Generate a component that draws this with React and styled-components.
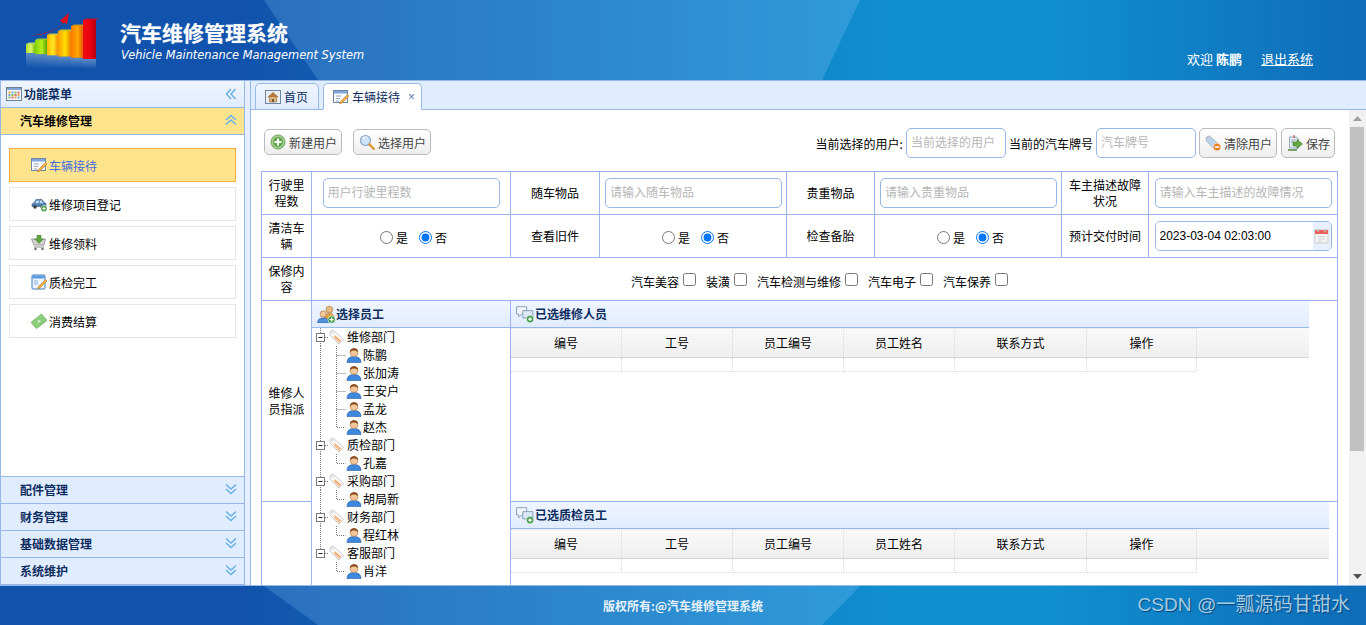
import React from "react";
import styled, { createGlobalStyle, css } from "styled-components";

const GlobalStyle = createGlobalStyle`
  html, body { margin: 0; height: 100%; overflow: hidden; }
  body { font-family: "Liberation Sans", "Noto Sans CJK SC", sans-serif; font-size: 12px; color: #000; }
  * { box-sizing: border-box; }
`;

const blueBar = css`
  position: relative;
  overflow: hidden;
  color: #fff;
  background: linear-gradient(90deg, #1153ac 0%, #1153ac 18%, #1090d0 66%, #1090d0 76%, #0e6cb8 100%);
  &::before {
    content: "";
    position: absolute;
    inset: 0;
    background: linear-gradient(90deg, #2a6ebd 18%, #2f9ad8 62%);
    clip-path: polygon(264px 0, 860px 0, 822px 100%, 318px 100%);
  }
  & > * { position: relative; }
`;

const Page = styled.div`
  height: 625px;
  display: flex;
  flex-direction: column;
`;

const Header = styled.header`
  ${blueBar}
  height: 80px;
  flex: none;
  display: flex;
  padding: 8px 53px 0 20px;
`;

const Brand = styled.div`
  margin-left: 15px;
  padding-top: 11px;
  flex: 1;
`;

const Title = styled.h1`
  margin: 0;
  font-size: 21px;
  line-height: 26px;
  font-weight: 700;
  font-family: "Noto Sans CJK SC", sans-serif;
  text-shadow: 0 0 1px rgba(255, 255, 255, 0.5);
`;

const SubTitle = styled.div`
  font-family: "DejaVu Sans", sans-serif;
  font-style: italic;
  font-size: 11.42px;
  line-height: 16px;
  margin: 2px 0 0 1px;
`;

const UserBox = styled.div`
  display: flex;
  align-items: center;
  gap: 19px;
  height: 16px;
  margin-top: 42px;
  font-size: 13px;
  font-family: "Noto Sans CJK SC", sans-serif;
  b { font-weight: 700; }
  a { color: #fff; text-decoration: underline; }
`;

const Body = styled.div`
  flex: 1;
  min-height: 0;
  display: flex;
  gap: 5px;
  background: #e6efff;
  border-top: 1px solid #95b8e7;
`;

const Side = styled.aside`
  width: 245px;
  flex: none;
  display: flex;
  flex-direction: column;
  border-left: 1px solid #95b8e7;
  border-right: 1px solid #95b8e7;
`;

const PanelHead = styled.div`
  height: 27px;
  flex: none;
  display: flex;
  align-items: center;
  gap: ${(p) => p.$gap ?? 2}px;
  padding: 0 ${(p) => p.$right ?? 0}px 0 ${(p) => p.$left ?? 5}px;
  background: linear-gradient(#eff5ff, #e0ecff);
  border-bottom: 1px solid #95b8e7;
  color: #0e2d5f;
  font-weight: 700;
  font-family: "Noto Sans CJK SC", sans-serif;
  line-height: 16px;
  & > span { flex: 1; }
`;

const AccordionHead = styled.div`
  height: 27px;
  flex: none;
  display: flex;
  align-items: center;
  justify-content: space-between;
  padding: 0 7px 2px 19px;
  background: ${(p) => (p.$active ? "#ffe48d" : "#e0ecff")};
  color: ${(p) => (p.$active ? "#000" : "#0e2d5f")};
  border-bottom: 1px solid #95b8e7;
  font-weight: 700;
  font-family: "Noto Sans CJK SC", sans-serif;
`;

const MenuList = styled.div`
  flex: 1;
  background: #fff;
  padding: 13px 8px 0;
  display: flex;
  flex-direction: column;
  gap: 5px;
  border-bottom: 1px solid #95b8e7;
`;

const MenuItem = styled.div`
  height: 34px;
  flex: none;
  display: flex;
  align-items: center;
  gap: 2px;
  padding-left: 21px;
  border: 1px solid ${(p) => (p.$active ? "#ffab3f" : "#e5e5e5")};
  background: ${(p) => (p.$active ? "#ffe48d" : "#fff")};
  color: ${(p) => (p.$active ? "#416ce0" : "#000")};
  font-family: "Noto Sans CJK SC", sans-serif;
`;

const Main = styled.main`
  flex: 1;
  min-width: 0;
  display: flex;
  flex-direction: column;
  background: #fff;
  border-left: 1px solid #95b8e7;
`;

const TabBar = styled.div`
  height: 29px;
  flex: none;
  display: flex;
  align-items: flex-end;
  gap: 4px;
  padding-left: 4px;
  background: #e0ecff;
  border-bottom: 1px solid #95b8e7;
`;

const Tab = styled.div`
  height: 27px;
  margin-bottom: -1px;
  display: flex;
  align-items: center;
  gap: 3px;
  padding: 0 ${(p) => (p.$active ? 6 : 10)}px 0 9px;
  border: 1px solid #95b8e7;
  border-radius: 5px 5px 0 0;
  color: #0e2d5f;
  font-family: "Noto Sans CJK SC", sans-serif;
  background: ${(p) => (p.$active ? "#fff" : "linear-gradient(#eff5ff, #e0ecff)")};
  border-bottom-color: ${(p) => (p.$active ? "#fff" : "#95b8e7")};
  i { font: 12px "Liberation Sans", sans-serif; color: #5a7db0; margin-left: 5px; }
`;

const ContentRow = styled.div`
  flex: 1;
  min-height: 0;
  display: flex;
`;

const Content = styled.div`
  flex: 1;
  min-width: 0;
  overflow-y: auto;
  padding: 18px 0 11px 10px;
`;

const ScrollRail = styled.div`
  width: 17px;
  flex: none;
  display: flex;
  flex-direction: column;
  background: #f1f1f1;
`;

const RailButton = styled.div`
  height: 17px;
  flex: none;
  display: flex;
  align-items: center;
  justify-content: center;
`;

const RailThumb = styled.div`
  height: 324px;
  flex: none;
  margin: 0 2px 0 1px;
  background: #c1c1c1;
`;

const RailSpace = styled.div`
  flex: 1;
`;

const Toolbar = styled.div`
  width: 1071px;
  height: 30px;
  margin: 0 0 13px 3px;
  display: flex;
  align-items: center;
  justify-content: space-between;
`;

const Group = styled.div`
  display: flex;
  align-items: center;
  gap: ${(p) => p.$gap}px;
  margin-left: ${(p) => p.$left ?? 0}px;
  margin-bottom: ${(p) => p.$lift ?? 0}px;
`;

const Button = styled.a`
  height: ${(p) => (p.$tall ? 30 : 26)}px;
  display: inline-flex;
  align-items: center;
  gap: 3px;
  padding: 0 4px 0 5px;
  border: 1px solid #bbb;
  border-radius: 5px;
  background: linear-gradient(#fff, #eee);
  color: #444;
  font-family: "Noto Sans CJK SC", sans-serif;
`;

const Caption = styled.span`
  font-family: "Noto Sans CJK SC", sans-serif;
  margin: 0 3px 0 ${(p) => p.$left ?? 0}px;
`;

const TextBox = styled.input`
  width: ${(p) => p.$w ?? 177}px;
  height: 30px;
  padding: 0 4px;
  border: 1px solid #95b8e7;
  border-radius: 5px;
  outline: none;
  font: 12px "Liberation Sans", "Noto Sans CJK SC", sans-serif;
  color: #000;
  vertical-align: middle;
  &::placeholder { color: #b5b5b5; opacity: 1; }
`;

const DateBox = styled.div`
  width: 177px;
  height: 30px;
  margin: 0 auto;
  display: flex;
  border: 1px solid #95b8e7;
  border-radius: 5px;
  overflow: hidden;
  input {
    flex: 1;
    min-width: 0;
    border: 0;
    outline: none;
    padding: 0 4px;
    font: 12px "Liberation Sans", sans-serif;
    color: #000;
  }
`;

const DateButton = styled.span`
  width: 18px;
  flex: none;
  display: flex;
  align-items: center;
  justify-content: center;
  background: #e8f0fd;
`;

const FormTable = styled.table`
  width: 1077px;
  table-layout: fixed;
  border-collapse: collapse;
  font-family: "Noto Sans CJK SC", sans-serif;
  line-height: 16px;
  td {
    border: 1px solid #9bb3f5;
    padding: 5px;
    text-align: center;
    height: 43px;
  }
`;

const FlushCell = styled.td`
  && {
    padding: 0;
    height: ${(p) => p.$h}px;
    vertical-align: top;
    text-align: left;
  }
`;

const RadioGroup = styled.div`
  padding-top: 2px;
`;

const Radio = styled.input.attrs({ type: "radio" })`
  vertical-align: -1px;
`;

const RadioGap = styled.span`
  display: inline-block;
  width: 6px;
`;

const CheckList = styled.div`
  display: flex;
  justify-content: center;
  gap: 7px;
  padding: 6px 7px 0 0;
  label { display: flex; align-items: center; line-height: 16px; }
  input { margin: -3px 3px 3px 4px; }
`;

const TreeBox = styled.div`
  padding-left: 3px;
  height: 270px;
`;

const TreeRow = styled.div`
  height: 18px;
  display: flex;
  align-items: center;
`;

const NodeText = styled.span`
  margin-left: ${(p) => p.$left}px;
`;

const GridPanel = styled.div`
  width: ${(p) => p.$w}px;
`;

const GridHead = styled.div`
  height: 30px;
  display: flex;
  background: linear-gradient(#f9f9f9, #efefef);
  border-bottom: 1px solid #d4d4d4;
`;

const GridRow = styled.div`
  height: 14px;
  display: flex;
`;

const GridCell = styled.div`
  width: ${(p) => p.$w}px;
  flex: none;
  display: flex;
  align-items: center;
  justify-content: center;
  border-right: 1px dotted #d8d8d8;
  border-top: ${(p) => (p.$body ? "0" : "1px dotted #dcdcdc")};
  border-bottom: ${(p) => (p.$body ? "1px dotted #d8d8d8" : "0")};
`;

const Footer = styled.footer`
  ${blueBar}
  height: 40px;
  flex: none;
  border-top: 1px solid #95b8e7;
  display: flex;
  align-items: center;
  justify-content: center;
  font-weight: 700;
  font-family: "Noto Sans CJK SC", sans-serif;
  color: #e8f2fb;
`;

const Watermark = styled.div`
  && { position: absolute; }
  right: 16px;
  top: 6px;
  font-size: 19.1px;
  line-height: 26px;
  font-weight: 400;
  font-family: "Liberation Sans", "Noto Sans CJK SC", sans-serif;
  color: #a3cbe2;
  text-shadow: 1px 1px 1px rgba(0, 30, 80, 0.6);
`;

const Shape = styled.svg`
  flex: none;
  display: block;
`;

const Arrow = ({ dir }) => {
  const rot = { left: -90, up: 0, down: 180 }[dir];
  return (
    <Shape width="12" height="12" viewBox="0 0 12 12" fill="none" stroke="#66aee8" strokeWidth="1.4">
      <g transform={`rotate(${rot} 6 6)`}>
        <path d="M1 6l5-4.5L11 6M1 10.5L6 6l5 4.5" />
      </g>
    </Shape>
  );
};

const icons = {
  grid: (
    <>
      <rect x=".5" y="1.5" width="15" height="13" fill="#f4f6fb" stroke="#6f7f96" />
      <rect x="1" y="2" width="14" height="2" fill="#7fa4d8" />
      {[2.5, 5.5, 8.5, 11.5].map((x, i) =>
        [5.5, 8, 10.5].map((y, j) => (
          <rect key={x + "-" + y} x={x} y={y} width="2" height="2" fill={["#e9a33c", "#6ca9e0", "#86bd5a", "#d9716a"][(i + j) % 4]} />
        ))
      )}
    </>
  ),
  home: (
    <>
      <rect x=".5" y="1.5" width="15" height="13" fill="#e9eef5" stroke="#6f86a5" />
      <path d="M8 3.500L3 8h1.500v5h7V8H13z" fill="#d6b27c" stroke="#9c6d34" strokeWidth=".6" />
      <path d="M8 3.500L3 8h10z" fill="#b9763f" />
      <rect x="7" y="10" width="2" height="3" fill="#7a5a30" />
    </>
  ),
  formPen: (
    <>
      <rect x=".5" y="1.5" width="14" height="12" fill="#f7f9fc" stroke="#6f86a5" />
      <rect x="1" y="2" width="13" height="2.5" fill="#7ea6da" />
      <path d="M3 7h5M3 9.5h4M3 12h3" stroke="#9aa8ba" />
      <path d="M14.5 5.5l1.5 1.5-7 7-2.5 1 1-2.5z" fill="#f2b04a" stroke="#b9772a" strokeWidth=".6" />
    </>
  ),
  formBlue: (
    <>
      <rect x="1" y="1" width="13" height="14" rx="1" fill="#eef4fb" stroke="#3d7cc4" />
      <rect x="1.5" y="1.5" width="12" height="3" fill="#5b9ade" />
      <rect x="3" y="6" width="4" height="5" fill="#b9d3ef" />
      <path d="M14.5 5.5l1.5 1.5-7 7-2.5 1 1-2.5z" fill="#f2b04a" stroke="#b9772a" strokeWidth=".6" />
    </>
  ),
  carAdd: (
    <>
      <path d="M1 10.5V8l2-1 2-3.5h6l2 3 2 1v3z" fill="#4f7fb5" stroke="#35597f" strokeWidth=".6" />
      <path d="M5.5 4.5h2.3v2.7H4zM8.7 4.5h2l1.5 2.7H8.7z" fill="#bfd8ef" />
      <circle cx="4" cy="11" r="1.7" fill="#3a3a3a" />
      <circle cx="11" cy="11" r="1.7" fill="#3a3a3a" />
      <circle cx="13" cy="12.5" r="3.2" fill="#3f9a46" stroke="#fff" strokeWidth=".5" />
      <path d="M13 10.8v3.4M11.3 12.5h3.4" stroke="#fff" strokeWidth="1.1" />
    </>
  ),
  cart: (
    <>
      <path d="M.5 4h14l-1.5 6H3z" fill="#d8d8d8" stroke="#8b8b8b" strokeWidth=".8" />
      <path d="M3 12h10" stroke="#8b8b8b" />
      <circle cx="4.5" cy="14" r="1.3" fill="#777" />
      <circle cx="11.5" cy="14" r="1.3" fill="#777" />
      <path d="M6 0h4v4h2.5L8 8.5 3.5 4H6z" fill="#62a83f" stroke="#3f7d26" strokeWidth=".5" />
    </>
  ),
  money: (
    <>
      <path d="M0 9.5L10.5 1 16 7.5 5.5 15.5z" fill="#8ccf7c" stroke="#5ea650" strokeWidth=".7" />
      <circle cx="8" cy="8.3" r="2.2" fill="#c6ebb9" stroke="#5ea650" strokeWidth=".5" />
    </>
  ),
  add: (
    <>
      <circle cx="8" cy="8" r="7" fill="#a8cf96" stroke="#6ea35a" />
      <circle cx="8" cy="8" r="5" fill="#5fa747" />
      <path d="M8 4.5v7M4.5 8h7" stroke="#fff" strokeWidth="2" />
    </>
  ),
  search: (
    <>
      <circle cx="6.5" cy="6.5" r="5" fill="#cfe4f8" stroke="#8ba8c8" strokeWidth="1.2" />
      <path d="M3.5 5a3.5 3.5 0 0 1 3-2" stroke="#fff" fill="none" />
      <path d="M10.3 10.3l4.5 4.5" stroke="#d99a3c" strokeWidth="2.4" strokeLinecap="round" />
    </>
  ),
  tagMinus: (
    <>
      <path d="M1 2.5L4.5 1 14 9.5 9.5 14 1.5 6z" fill="#bcd6ef" stroke="#9ca9b8" strokeWidth=".8" />
      <circle cx="3.7" cy="3.7" r="1" fill="#fff" stroke="#8c9aab" strokeWidth=".5" />
      <circle cx="12" cy="12" r="3.8" fill="#ea7b1d" stroke="#fff" strokeWidth=".5" />
      <rect x="9.8" y="11.2" width="4.4" height="1.6" fill="#fff" />
    </>
  ),
  save: (
    <>
      <path d="M2.5 2h7l2 2v9h-9z" fill="#e6edf6" stroke="#8296ad" strokeWidth=".8" />
      <path d="M4 5h5M4 7h3" stroke="#9aa9ba" />
      <path d="M7 0v3" stroke="#c0392b" />
      <path d="M6 7h4V4.5L15.5 9 10 13.5V11H6z" fill="#65a844" stroke="#3f7d26" strokeWidth=".6" />
      <path d="M1 15h9" stroke="#4a7f34" strokeWidth="1.4" />
    </>
  ),
  calendar: (
    <>
      <rect x="1" y="2" width="13" height="13" fill="#f3f3f3" stroke="#cfcfcf" />
      <rect x="1" y="2" width="13" height="4" fill="#e8615a" />
      <path d="M4 1v3M11 1v3" stroke="#c8c8c8" strokeWidth="1.4" />
      <path d="M4 8.5h7M4 11h7M4 13h4" stroke="#cdd3da" />
    </>
  ),
  tag: (
    <>
      <path d="M1 3l3-2 10.5 9.5L10 15 1.5 6.5z" fill="#fbfbfb" stroke="#c9c9c9" />
      <path d="M6 6l6.5 5.5-2.5 2.5L4.5 8z" fill="#f6b98a" />
      <circle cx="3.5" cy="3.5" r=".9" fill="#fff" stroke="#bbb" strokeWidth=".5" />
    </>
  ),
  user: (
    <>
      <path d="M1 15.5c0-4 2.5-6 7-6s7 2 7 6z" fill="#3d87dd" stroke="#2a5d9e" strokeWidth=".6" />
      <circle cx="8" cy="5.5" r="4" fill="#f1c79c" stroke="#a6683a" strokeWidth=".5" />
      <path d="M4 5.5C3.8 2.5 6 1.2 8 1.2s4.2 1.3 4 4.3c-1-1.5-2.5-2-4-2s-3 .5-4 2z" fill="#8a4a1f" />
    </>
  ),
  usersAdd: (
    <>
      <circle cx="11" cy="4" r="3" fill="#e6b77f" stroke="#a3702f" strokeWidth=".5" />
      <path d="M6.5 13c0-4 1.500-5.500 4.500-5.500s4.500 1.500 4.500 5.500z" fill="#dfa23f" stroke="#a3702f" strokeWidth=".5" />
      <circle cx="5.500" cy="8" r="2.800" fill="#f1c79c" stroke="#a6683a" strokeWidth=".5" />
      <path d="M.5 16c0-3.500 2-4.500 5-4.500s5 1 5 4.500z" fill="#4f8fdb" stroke="#2a5d9e" strokeWidth=".5" />
      <circle cx="13" cy="13" r="3.300" fill="#3f9a46" stroke="#fff" strokeWidth=".5" />
      <path d="M13 11.200v3.600M11.200 13h3.600" stroke="#fff" strokeWidth="1.100" />
    </>
  ),
  chatAdd: (
    <>
      <path d="M.5 1.500h9v6.500H5L2.500 10.500V8h-2z" fill="#f2f6fb" stroke="#7f98b5" strokeWidth=".8" />
      <path d="M6 5h9v6.500h-2V14l-2.500-2.500H6z" fill="#dbe7f4" stroke="#7f98b5" strokeWidth=".8" />
      <circle cx="12.500" cy="12.500" r="3.300" fill="#3f9a46" stroke="#fff" strokeWidth=".5" />
      <path d="M12.500 10.800v3.400M10.800 12.500h3.400" stroke="#fff" strokeWidth="1.100" />
    </>
  ),
};

const Icon = ({ name, size = 16 }) => (
  <Shape width={size} height={size} viewBox="0 0 16 16">
    {icons[name]}
  </Shape>
);

const bars = [
  { x: 6, w: 9, top: 36, id: "a", c: ["#a9e02a", "#dcf56a", "#7cc00e"] },
  { x: 15, w: 12, top: 32, id: "b", c: ["#7ed000", "#b8ee18", "#55a800"] },
  { x: 27, w: 11, top: 27, id: "c", c: ["#ffb400", "#ffe820", "#f59000"] },
  { x: 38, w: 13, top: 23, id: "d", c: ["#ff9a00", "#ffe000", "#ef7d00"] },
  { x: 51, w: 12, top: 18, id: "e", c: ["#ff7a00", "#ffa800", "#e85a00"] },
  { x: 63, w: 13, top: 12, id: "f", c: ["#f01010", "#e80010", "#b40010"] },
];

const Logo = () => (
  <Shape width="85" height="70" viewBox="0 0 85 70">
    <defs>
      {bars.map((b) => (
        <linearGradient key={b.id} id={b.id}>
          <stop offset="0" stopColor={b.c[0]} />
          <stop offset=".55" stopColor={b.c[1]} />
          <stop offset="1" stopColor={b.c[2]} />
        </linearGradient>
      ))}
      <linearGradient id="fade" x1="0" y1="0" x2="0" y2="1">
        <stop offset="0" stopColor="#fff" stopOpacity=".32" />
        <stop offset="1" stopColor="#fff" stopOpacity="0" />
      </linearGradient>
    </defs>
    <path d="M8 27.500c14-.500 27-4.500 35-12l-3-3 9-7.500-2 11.500-2.500-2C36 23 22 28.500 8 27.500z" fill="#e0101c" />
    {bars.map((b, i) => {
      const bottom = 45 + i * 1.2;
      return (
        <g key={b.id}>
          <rect x={b.x} y={b.top} width={b.w} height={bottom - b.top} fill={`url(#${b.id})`} />
          <path d={`M${b.x} ${b.top}l3-1.500h${b.w}l-3 1.500z`} fill={b.c[1]} opacity=".8" />
          <rect x={b.x} y={bottom} width={b.w} height={15 - i} fill="url(#fade)" />
        </g>
      );
    })}
  </Shape>
);

// dotted lines of the tree, drawn for one row
const Connector = ({ root, last, groupLast }) => (
  <Shape width={root ? 14 : 31} height="18" viewBox={`0 0 ${root ? 14 : 31} 18`} fill="none" stroke="#7a7a7a" strokeDasharray="1 1">
    {root ? (
      <>
        <path d={groupLast ? "M5.500 0v5" : "M5.500 0v5M5.500 13v5"} />
        <path d="M10 9.500h4" />
        <rect x="1.500" y="5.500" width="8" height="8" fill="#fff" stroke="#777" strokeDasharray="none" />
        <path d="M3.500 9.500h4" stroke="#222" strokeDasharray="none" />
      </>
    ) : (
      <>
        {!groupLast && <path d="M5.500 0v18" />}
        <path d={last ? "M21.500 0v9.500h9" : "M21.500 0v18M21.500 9.500h9"} />
      </>
    )}
  </Shape>
);

const menus = [
  { icon: "formPen", label: "车辆接待", active: true },
  { icon: "carAdd", label: "维修项目登记" },
  { icon: "cart", label: "维修领料" },
  { icon: "formBlue", label: "质检完工" },
  { icon: "money", label: "消费结算" },
];

const sections = ["配件管理", "财务管理", "基础数据管理", "系统维护"];

const departments = [
  { name: "维修部门", people: ["陈鹏", "张加涛", "王安户", "孟龙", "赵杰"] },
  { name: "质检部门", people: ["孔嘉"] },
  { name: "采购部门", people: ["胡局新"] },
  { name: "财务部门", people: ["程红林"] },
  { name: "客服部门", people: ["肖洋"] },
];

const gridCols = [
  ["编号", 111],
  ["工号", 111],
  ["员工编号", 111],
  ["员工姓名", 111],
  ["联系方式", 132],
  ["操作", 110],
];

const YesNo = ({ name }) => (
  <RadioGroup>
    <Radio name={name} />是<RadioGap />
    <Radio name={name} defaultChecked />否
  </RadioGroup>
);

const Grid = ({ title, width }) => (
  <GridPanel $w={width}>
    <PanelHead $left={5} $gap={1}>
      <Icon name="chatAdd" size={18} />
      <span>{title}</span>
    </PanelHead>
    <GridHead>
      {gridCols.map(([label, w]) => (
        <GridCell key={label} $w={w}>{label}</GridCell>
      ))}
    </GridHead>
    <GridRow>
      {gridCols.map(([label, w]) => (
        <GridCell key={label} $w={w} $body />
      ))}
    </GridRow>
  </GridPanel>
);

export default function App() {
  return (
    <Page>
      <GlobalStyle />
      <Header>
        <Logo />
        <Brand>
          <Title>汽车维修管理系统</Title>
          <SubTitle>Vehicle Maintenance Management System</SubTitle>
        </Brand>
        <UserBox>
          <span>欢迎 <b>陈鹏</b></span>
          <a href="#logout">退出系统</a>
        </UserBox>
      </Header>

      <Body>
        <Side>
          <PanelHead $right={7}>
            <Icon name="grid" />
            <span>功能菜单</span>
            <Arrow dir="left" />
          </PanelHead>
          <AccordionHead $active>
            汽车维修管理
            <Arrow dir="up" />
          </AccordionHead>
          <MenuList>
            {menus.map((m) => (
              <MenuItem key={m.label} $active={m.active}>
                <Icon name={m.icon} />
                {m.label}
              </MenuItem>
            ))}
          </MenuList>
          {sections.map((s) => (
            <AccordionHead key={s}>
              {s}
              <Arrow dir="down" />
            </AccordionHead>
          ))}
        </Side>

        <Main>
          <TabBar>
            <Tab>
              <Icon name="home" />
              首页
            </Tab>
            <Tab $active>
              <Icon name="formPen" />
              车辆接待
              <i>×</i>
            </Tab>
          </TabBar>
          <ContentRow>
            <Content>
              <Toolbar>
                <Group $gap={11} $lift={2}>
                  <Button><Icon name="add" />新建用户</Button>
                  <Button><Icon name="search" />选择用户</Button>
                </Group>
                <Group $gap={0}>
                  <Caption>当前选择的用户:</Caption>
                  <TextBox $w={100} placeholder="当前选择的用户" />
                  <Caption $left={3}>当前的汽车牌号</Caption>
                  <TextBox $w={100} placeholder="汽车牌号" />
                  <Group $gap={4} $left={3}>
                    <Button $tall><Icon name="tagMinus" />清除用户</Button>
                    <Button $tall><Icon name="save" />保存</Button>
                  </Group>
                </Group>
              </Toolbar>

              <FormTable>
                <colgroup>
                  {[50, 199, 89, 187, 88, 187, 87, 189].map((w, i) => (
                    <col key={i} width={w} />
                  ))}
                </colgroup>
                <tbody>
                  <tr>
                    <td>行驶里程数</td>
                    <td><TextBox placeholder="用户行驶里程数" /></td>
                    <td>随车物品</td>
                    <td><TextBox placeholder="请输入随车物品" /></td>
                    <td>贵重物品</td>
                    <td><TextBox placeholder="请输入贵重物品" /></td>
                    <td>车主描述故障状况</td>
                    <td><TextBox placeholder="请输入车主描述的故障情况" /></td>
                  </tr>
                  <tr>
                    <td>清洁车辆</td>
                    <td><YesNo name="clean" /></td>
                    <td>查看旧件</td>
                    <td><YesNo name="old" /></td>
                    <td>检查备胎</td>
                    <td><YesNo name="spare" /></td>
                    <td>预计交付时间</td>
                    <td>
                      <DateBox>
                        <input defaultValue="2023-03-04 02:03:00" />
                        <DateButton><Icon name="calendar" /></DateButton>
                      </DateBox>
                    </td>
                  </tr>
                  <tr>
                    <td>保修内容</td>
                    <td colSpan={7}>
                      <CheckList>
                        {["汽车美容", "装潢", "汽车检测与维修", "汽车电子", "汽车保养"].map((t) => (
                          <label key={t}>{t}<input type="checkbox" /></label>
                        ))}
                      </CheckList>
                    </td>
                  </tr>
                  <tr>
                    <td>维修人员指派</td>
                    <FlushCell rowSpan={2}>
                      <PanelHead $left={5} $gap={1}>
                        <Icon name="usersAdd" size={18} />
                        <span>选择员工</span>
                      </PanelHead>
                      <TreeBox>
                        {departments.map((d, di) => {
                          const groupLast = di === departments.length - 1;
                          return (
                            <React.Fragment key={d.name}>
                              <TreeRow>
                                <Connector root groupLast={groupLast} />
                                <Icon name="tag" />
                                <NodeText $left={2}>{d.name}</NodeText>
                              </TreeRow>
                              {d.people.map((p, pi) => (
                                <TreeRow key={p}>
                                  <Connector last={pi === d.people.length - 1} groupLast={groupLast} />
                                  <Icon name="user" />
                                  <NodeText $left={1}>{p}</NodeText>
                                </TreeRow>
                              ))}
                            </React.Fragment>
                          );
                        })}
                      </TreeBox>
                    </FlushCell>
                    <FlushCell colSpan={6} $h={201}>
                      <Grid title="已选维修人员" width={798} />
                    </FlushCell>
                  </tr>
                  <tr>
                    <td />
                    <FlushCell colSpan={6} $h={245}>
                      <Grid title="已选质检员工" width={818} />
                    </FlushCell>
                  </tr>
                </tbody>
              </FormTable>
            </Content>
            <ScrollRail>
              <RailButton>
                <Shape width="9" height="5" viewBox="0 0 9 5"><path d="M4.500 0L9 5H0z" fill="#a0a0a0" /></Shape>
              </RailButton>
              <RailThumb />
              <RailSpace />
              <RailButton>
                <Shape width="9" height="5" viewBox="0 0 9 5"><path d="M0 0h9L4.500 5z" fill="#505050" /></Shape>
              </RailButton>
            </ScrollRail>
          </ContentRow>
        </Main>
      </Body>

      <Footer>
        <span>版权所有:@汽车维修管理系统</span>
        <Watermark>CSDN @一瓢源码甘甜水</Watermark>
      </Footer>
    </Page>
  );
}
